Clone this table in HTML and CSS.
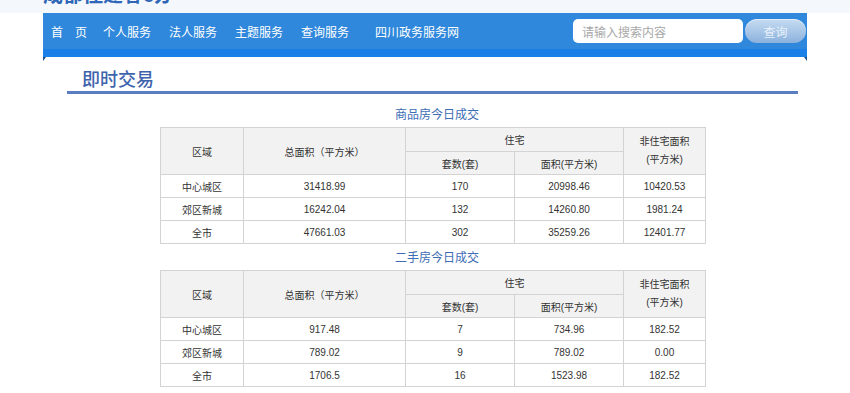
FILE: index.html
```html
<!DOCTYPE html>
<html lang="zh-CN">
<head>
<meta charset="utf-8">
<title>即时交易</title>
<link rel="stylesheet" href="styles.css">
</head>
<body>
<div class="topbar">
  <div class="wrap">
    <div class="site-title">成都住建蓉e办</div>
  </div>
</div>
<div class="wrap">
  <nav class="nav">
    <ul class="menu">
      <li class="home">首　页</li>
      <li>个人服务</li>
      <li>法人服务</li>
      <li>主题服务</li>
      <li>查询服务</li>
      <li class="gov">四川政务服务网</li>
    </ul>
    <form class="search">
      <input class="search-input" type="text" placeholder="请输入搜索内容">
      <button class="search-btn" type="button">查询</button>
    </form>
  </nav>
  <main class="content">
    <h1 class="page-title">即时交易</h1>

    <section class="block">
      <h2 class="caption">商品房今日成交</h2>
      <table class="data">
        <colgroup>
          <col class="c1"><col class="c2"><col class="c3"><col class="c4"><col class="c5">
        </colgroup>
        <thead>
          <tr class="head-top">
            <th rowspan="2">区域</th>
            <th rowspan="2">总面积（平方米）</th>
            <th colspan="2">住宅</th>
            <th rowspan="2" class="two-line">非住宅面积<br>(平方米)</th>
          </tr>
          <tr>
            <th>套数(套)</th>
            <th>面积(平方米)</th>
          </tr>
        </thead>
        <tbody>
          <tr><td>中心城区</td><td>31418.99</td><td>170</td><td>20998.46</td><td>10420.53</td></tr>
          <tr><td>郊区新城</td><td>16242.04</td><td>132</td><td>14260.80</td><td>1981.24</td></tr>
          <tr><td>全市</td><td>47661.03</td><td>302</td><td>35259.26</td><td>12401.77</td></tr>
        </tbody>
      </table>
    </section>

    <section class="block">
      <h2 class="caption next">二手房今日成交</h2>
      <table class="data">
        <colgroup>
          <col class="c1"><col class="c2"><col class="c3"><col class="c4"><col class="c5">
        </colgroup>
        <thead>
          <tr class="head-top">
            <th rowspan="2">区域</th>
            <th rowspan="2">总面积（平方米）</th>
            <th colspan="2">住宅</th>
            <th rowspan="2" class="two-line">非住宅面积<br>(平方米)</th>
          </tr>
          <tr>
            <th>套数(套)</th>
            <th>面积(平方米)</th>
          </tr>
        </thead>
        <tbody>
          <tr><td>中心城区</td><td>917.48</td><td>7</td><td>734.96</td><td>182.52</td></tr>
          <tr><td>郊区新城</td><td>789.02</td><td>9</td><td>789.02</td><td>0.00</td></tr>
          <tr><td>全市</td><td>1706.5</td><td>16</td><td>1523.98</td><td>182.52</td></tr>
        </tbody>
      </table>
    </section>
  </main>
</div>
</body>
</html>
```

FILE: styles.css
```css
html, body {
  margin: 0;
  padding: 0;
  background: #ffffff;
  font-family: "Liberation Sans", "Noto Sans CJK SC", sans-serif;
  color: #333333;
}

.wrap {
  width: 764px;
  margin: 0 auto;
}

.topbar {
  height: 13px;
  overflow: hidden;
  background: #f4f8fc;
}

.site-title {
  margin-top: -15px;
  font-size: 20px;
  line-height: 20px;
  font-weight: bold;
  color: #2f66b8;
  white-space: nowrap;
}

.nav {
  position: relative;
  display: flex;
  align-items: flex-start;
  height: 44px;
  background: linear-gradient(#2f88db 0, #2f88db 36px, #1a7fe6 36px, #1a7fe6 44px);
}

.nav::before,
.nav::after {
  content: "";
  position: absolute;
  top: 100%;
  width: 0;
  height: 0;
}

.nav::before {
  left: 0;
  border-top: 4px solid #174f8c;
  border-right: 3px solid transparent;
}

.nav::after {
  right: 0;
  border-top: 4px solid #174f8c;
  border-left: 3px solid transparent;
}

.menu {
  display: flex;
  gap: 18px;
  list-style: none;
  margin: 0;
  padding: 0 0 0 8px;
  height: 36px;
  align-items: center;
  font-family: "Noto Sans CJK SC", sans-serif;
  font-size: 12px;
  color: #ffffff;
  white-space: nowrap;
}

.menu .home {
  margin-right: -2px;
}

.menu .gov {
  margin-left: 8px;
}

.search {
  display: flex;
  align-items: center;
  height: 36px;
  margin: 0 1px 0 auto;
}

.search-input {
  box-sizing: border-box;
  width: 170px;
  height: 24px;
  border: none;
  border-radius: 5px;
  padding: 0 9px;
  background: #ffffff;
  font-family: "Noto Sans CJK SC", sans-serif;
  font-size: 12px;
  color: #333;
  outline: none;
}

.search-input::placeholder {
  color: #a8a8a8;
}

.search-btn {
  width: 61px;
  height: 24px;
  margin-left: 2px;
  border: none;
  border-radius: 12px;
  padding: 0;
  background: linear-gradient(#c6dbf1 0%, #a9c7e8 50%, #8bb1dc 100%);
  box-shadow: inset 0 1px 0 rgba(255, 255, 255, 0.5);
  font-family: "Noto Sans CJK SC", sans-serif;
  font-size: 12px;
  color: #e9f1fa;
}

.content {
  padding-bottom: 20px;
}

.page-title {
  margin: 0 9px 0 24px;
  padding: 9px 0 1px 15px;
  font-family: "Noto Sans CJK SC", sans-serif;
  font-size: 18px;
  line-height: 24px;
  font-weight: 500;
  color: #3e63ad;
  border-bottom: 3px solid #5a7cc0;
}

.block {
  width: 545px;
  margin-left: 117px;
}

.caption {
  margin: 12px 0 5px;
  padding-left: 9px;
  text-align: center;
  font-family: "Noto Sans CJK SC", sans-serif;
  font-size: 12px;
  line-height: 16px;
  font-weight: normal;
  color: #3d6db5;
}

.caption.next {
  margin-top: 5px;
}

.data {
  width: 545px;
  border-collapse: collapse;
  table-layout: fixed;
  font-size: 10px;
  color: #333333;
}

.data .c1 { width: 83px; }
.data .c2 { width: 162px; }
.data .c3 { width: 109px; }
.data .c4 { width: 109px; }
.data .c5 { width: 82px; }

.data th,
.data td {
  border: 1px solid #d3d3d3;
  height: 22px;
  padding: 0;
  text-align: center;
  vertical-align: middle;
  font-weight: normal;
}

.data .head-top th {
  height: 23px;
}

.data th {
  background: #f2f2f2;
}

.data .two-line {
  line-height: 18px;
}
```
